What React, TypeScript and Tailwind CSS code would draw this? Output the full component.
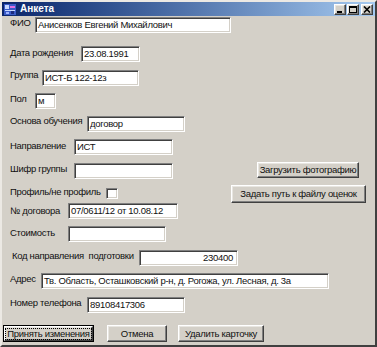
import type { ReactNode } from 'react'

const sunken =
  'border border-t-[#808080] border-l-[#808080] border-b-white border-r-white bg-white shadow-[inset_1px_1px_0_#404040,inset_-1px_-1px_0_#d4d0c8]'
const raised =
  'border border-t-white border-l-white border-b-[#404040] border-r-[#404040] bg-[#d4d0c8] shadow-[inset_-1px_-1px_0_#808080,inset_1px_1px_0_#e8e6e1]'
const text = 'text-[9.5px] tracking-[-0.3px] text-[#111]'

function Field({ w, value = '', right = false, mt = '' }: { w: string; value?: string; right?: boolean; mt?: string }) {
  return (
    <div
      className={`h-[16px] shrink-0 overflow-hidden whitespace-nowrap pl-[2px] pr-[4px] leading-[14px] ${text} ${sunken} ${w} ${mt} ${right ? 'text-right' : ''}`}
    >
      {value}
    </div>
  )
}

function Label({ w, mt = '', children }: { w: string; mt?: string; children: ReactNode }) {
  return <span className={`shrink-0 whitespace-nowrap leading-[13px] ${text} ${w} ${mt}`}>{children}</span>
}

function Btn({ className, children }: { className: string; children: ReactNode }) {
  return (
    <button
      type="button"
      className={`flex shrink-0 items-center justify-center whitespace-nowrap px-0 leading-[12px] ${text} ${raised} ${className}`}
    >
      {children}
    </button>
  )
}

function CaptionButton({ children }: { children: ReactNode }) {
  return (
    <div className={`flex h-[11px] w-[12px] items-center justify-center ${raised}`}>
      <svg width="8" height="7" viewBox="0 0 8 7" className="block">
        {children}
      </svg>
    </div>
  )
}

export default function App() {
  return (
    <div className="h-[347px] w-[377px] overflow-hidden border-2 border-t-[#ece9e4] border-l-[#ece9e4] border-b-[#404040] border-r-[#404040] bg-[#d4d0c8] font-['Liberation_Sans',Arial,sans-serif]">
      {/* title bar */}
      <div className="flex h-[14px] items-center bg-gradient-to-r from-[#0a246a] to-[#a6caf0] pl-[1px] pr-[1px]">
        <svg width="14" height="13" viewBox="0 0 14 13" className="shrink-0">
          <rect x="1" y="1" width="12" height="11" fill="#3a5bc7" />
          <rect x="2" y="2" width="4" height="4" fill="#c8d8ff" />
          <rect x="7" y="3" width="5" height="2" fill="#e070e0" />
          <rect x="2" y="7" width="10" height="1" fill="#c8d8ff" />
          <rect x="3" y="9" width="3" height="2" fill="#9fb4ff" />
          <rect x="8" y="8" width="3" height="3" fill="#1a2a80" />
        </svg>
        <span className="ml-[3px] text-[10px] font-bold leading-[12px] text-white">Анкета</span>
        <div className="ml-auto flex items-center pr-[1px]">
          <CaptionButton>
            <rect x="1" y="5" width="5" height="2" fill="#000" />
          </CaptionButton>
          <div className="w-[1px]" />
          <CaptionButton>
            <rect x="0.5" y="0.5" width="7" height="6" fill="none" stroke="#000" />
            <rect x="0" y="0" width="8" height="2" fill="#000" />
          </CaptionButton>
          <div className="w-[2px]" />
          <CaptionButton>
            <path d="M1 0.5 L7 6.5 M7 0.5 L1 6.5" stroke="#000" strokeWidth="1.6" />
          </CaptionButton>
        </div>
      </div>

      {/* form */}
      <div className="flex flex-col pl-[8px] pt-[1px]">
        <div className="flex h-[29px] items-start">
          <Label w="w-[25px]" mt="-mt-[1px]">ФИО</Label>
          <Field w="w-[196px]" value="Анисенков Евгений Михайлович" />
        </div>
        <div className="flex h-[24px] items-start">
          <Label w="w-[71px]">Дата рождения</Label>
          <Field w="w-[59px]" value="23.08.1991" />
        </div>
        <div className="flex h-[23px] items-start">
          <Label w="w-[32px]" mt="-mt-[2px]">Группа</Label>
          <Field w="w-[97px]" value="ИСТ-Б 122-12з" />
        </div>
        <div className="flex h-[23px] items-start">
          <Label w="w-[25px]" mt="-mt-[1px]">Пол</Label>
          <Field w="w-[21px]" value="м" />
        </div>
        <div className="flex h-[23px] items-start">
          <Label w="w-[77px]" mt="-mt-[2px]">Основа обучения</Label>
          <Field w="w-[98px]" value="договор" />
        </div>
        <div className="flex h-[23px] items-start">
          <Label w="w-[64px]">Направление</Label>
          <Field w="w-[99px]" value="ИСТ" />
        </div>
        <div className="flex h-[23px] items-start">
          <Label w="w-[64px]">Шифр группы</Label>
          <Field w="w-[99px]" mt="mt-[1px]" />
          <Btn className="ml-auto mr-[16px] h-[16px] w-[102px]">Загрузить фотографию</Btn>
        </div>
        <div className="flex h-[18px] items-start">
          <Label w="w-[96px]">Профиль/не профиль</Label>
          <div className={`mt-[3px] h-[11px] w-[12px] shrink-0 ${sunken}`} />
          <Btn className="ml-auto mr-[9px] h-[18px] w-[135px]">Задать путь к файлу оценок</Btn>
        </div>
        <div className="flex h-[23px] items-start">
          <Label w="w-[58px]" mt="mt-[1px]">№ договора</Label>
          <Field w="w-[110px]" value="07/0611/12 от 10.08.12" />
        </div>
        <div className="flex h-[24px] items-start">
          <Label w="w-[58px]">Стоимость</Label>
          <Field w="w-[98px]" />
        </div>
        <div className="flex h-[23px] items-start">
          <Label w="w-[129px]" mt="-mt-[1px]">
            <span className="pl-[2px]">Код направления&nbsp; подготовки</span>
          </Label>
          <Field w="w-[99px]" value="230400" right />
        </div>
        <div className="flex h-[24px] items-start">
          <Label w="w-[31px]" mt="-mt-[1px]">Адрес</Label>
          <Field w="w-[288px]" value="Тв. Область, Осташковский р-н, д. Рогожа, ул. Лесная, д. 3а" />
        </div>
        <div className="flex h-[28px] items-start">
          <Label w="w-[77px]" mt="-mt-[1px]">Номер телефона</Label>
          <Field w="w-[98px]" value="89108417306" />
        </div>
      </div>

      {/* buttons */}
      <div className="flex items-start pl-[1px]">
        <div className="shrink-0 border border-black">
          <Btn className="h-[15px] w-[89px]">
            <span className="border border-dotted border-black px-[1px] leading-[10px]">Принять изменения</span>
          </Btn>
        </div>
        <Btn className="ml-[13px] h-[17px] w-[60px]">Отмена</Btn>
        <Btn className="ml-[11px] h-[17px] w-[86px]">Удалить карточку</Btn>
      </div>
    </div>
  )
}
